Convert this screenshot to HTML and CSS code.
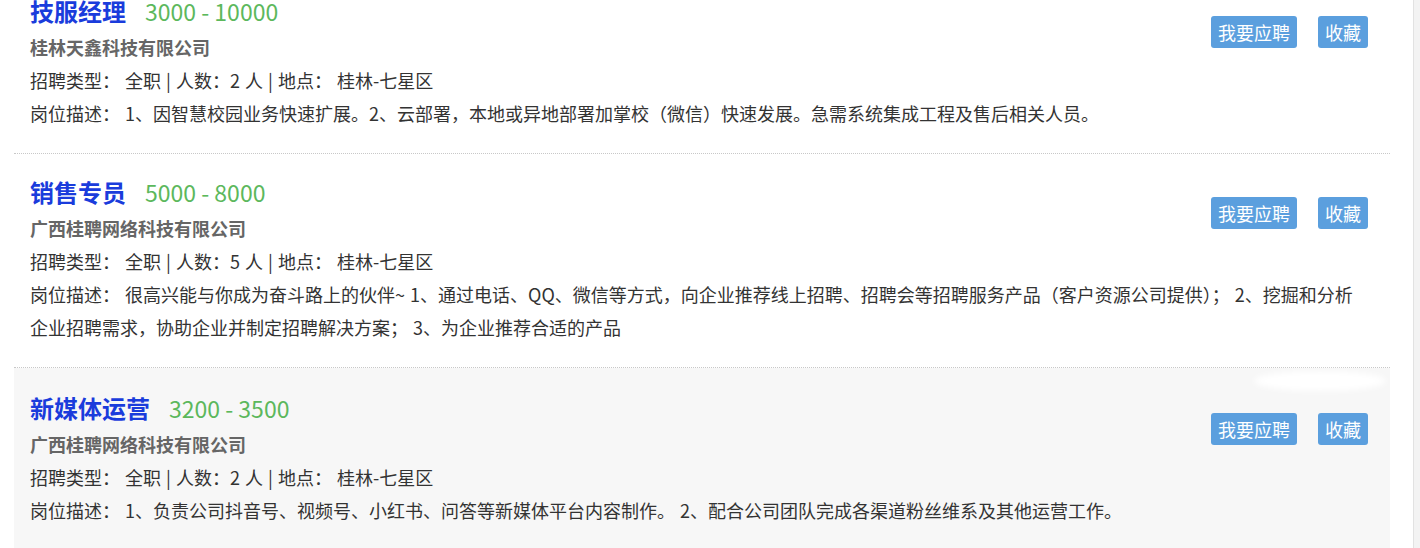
FILE: index.html
```html
<!DOCTYPE html>
<html lang="zh-CN">
<head>
    <meta charset="UTF-8">
    <title>招聘信息</title>
    <link rel="stylesheet" href="styles.css">
</head>
<body>
    <div class="main">
        <ul class="job-list">
            <li class="job-item">
                <div class="job-head">
                    <div class="job-info">
                        <h3 class="job-title"><a href="#">技服经理</a><span class="salary">3000 - 10000</span></h3>
                        <p class="company">桂林天鑫科技有限公司</p>
                        <p class="meta">招聘类型： 全职 | 人数：2 人 | 地点： 桂林-七星区</p>
                    </div>
                    <div class="job-actions">
                        <button type="button" class="btn">我要应聘</button>
                        <button type="button" class="btn">收藏</button>
                    </div>
                </div>
                <p class="desc">岗位描述： 1、因智慧校园业务快速扩展。2、云部署，本地或异地部署加掌校（微信）快速发展。急需系统集成工程及售后相关人员。</p>
            </li>
            <li class="job-item">
                <div class="job-head">
                    <div class="job-info">
                        <h3 class="job-title"><a href="#">销售专员</a><span class="salary">5000 - 8000</span></h3>
                        <p class="company">广西桂聘网络科技有限公司</p>
                        <p class="meta">招聘类型： 全职 | 人数：5 人 | 地点： 桂林-七星区</p>
                    </div>
                    <div class="job-actions">
                        <button type="button" class="btn">我要应聘</button>
                        <button type="button" class="btn">收藏</button>
                    </div>
                </div>
                <p class="desc">岗位描述： 很高兴能与你成为奋斗路上的伙伴~ 1、通过电话、QQ、微信等方式，向企业推荐线上招聘、招聘会等招聘服务产品（客户资源公司提供）； 2、挖掘和分析企业招聘需求，协助企业并制定招聘解决方案； 3、为企业推荐合适的产品</p>
            </li>
            <li class="job-item hover">
                <div class="smudge"></div>
                <div class="job-head">
                    <div class="job-info">
                        <h3 class="job-title"><a href="#">新媒体运营</a><span class="salary">3200 - 3500</span></h3>
                        <p class="company">广西桂聘网络科技有限公司</p>
                        <p class="meta">招聘类型： 全职 | 人数：2 人 | 地点： 桂林-七星区</p>
                    </div>
                    <div class="job-actions">
                        <button type="button" class="btn">我要应聘</button>
                        <button type="button" class="btn">收藏</button>
                    </div>
                </div>
                <p class="desc">岗位描述： 1、负责公司抖音号、视频号、小红书、问答等新媒体平台内容制作。 2、配合公司团队完成各渠道粉丝维系及其他运营工作。</p>
            </li>
        </ul>
    </div>
    <div class="scroll-edge"></div>
</body>
</html>
```

FILE: styles.css
```css
html, body {
    margin: 0;
    height: 100%;
    overflow: hidden;
}
body {
    display: flex;
    font-family: "Noto Sans CJK SC", "Noto Sans", sans-serif;
    font-size: 18px;
    color: #333;
    background: #fff;
}
.main {
    flex: 1;
}
.scroll-edge {
    width: 6px;
    border-left: 1px solid #e2e2e2;
    background: #f3f3f3;
}
.job-list {
    list-style: none;
    margin: -27px 0 0 14px;
    padding: 0;
    width: 1376px;
}
.job-item {
    position: relative;
    padding: 22px 16px 23px 16px;
    border-bottom: 1px dotted #c8c8c8;
}
.job-item.hover {
    background: #f7f7f7;
    padding-top: 24px;
}
.job-head {
    display: flex;
    justify-content: space-between;
}
.job-title {
    margin: 0 0 4px 0;
    font-size: 24px;
    line-height: 31px;
    font-weight: bold;
}
.job-title a {
    color: #1a3cdc;
    text-decoration: none;
}
.salary {
    margin-left: 19px;
    font-size: 23px;
    font-weight: normal;
    color: #5cb85c;
}
.company {
    margin: 0;
    font-weight: bold;
    color: #666;
    line-height: 33px;
}
.meta, .desc {
    margin: 0;
    line-height: 33px;
    word-spacing: 1px;
}
.desc {
    margin-right: 10px;
}
.job-actions {
    display: flex;
    gap: 21px;
    padding-top: 21px;
    margin-right: 6px;
}
.btn {
    height: 32px;
    padding: 0 7px;
    border: none;
    border-radius: 3px;
    background: #5b9fde;
    color: #fff;
    font-family: inherit;
    font-size: 18px;
    line-height: 32px;
    cursor: pointer;
}
.smudge {
    position: absolute;
    top: 3px;
    left: 1240px;
    width: 132px;
    height: 20px;
    background: #fff;
    border-radius: 50%;
    filter: blur(3px);
}
```
